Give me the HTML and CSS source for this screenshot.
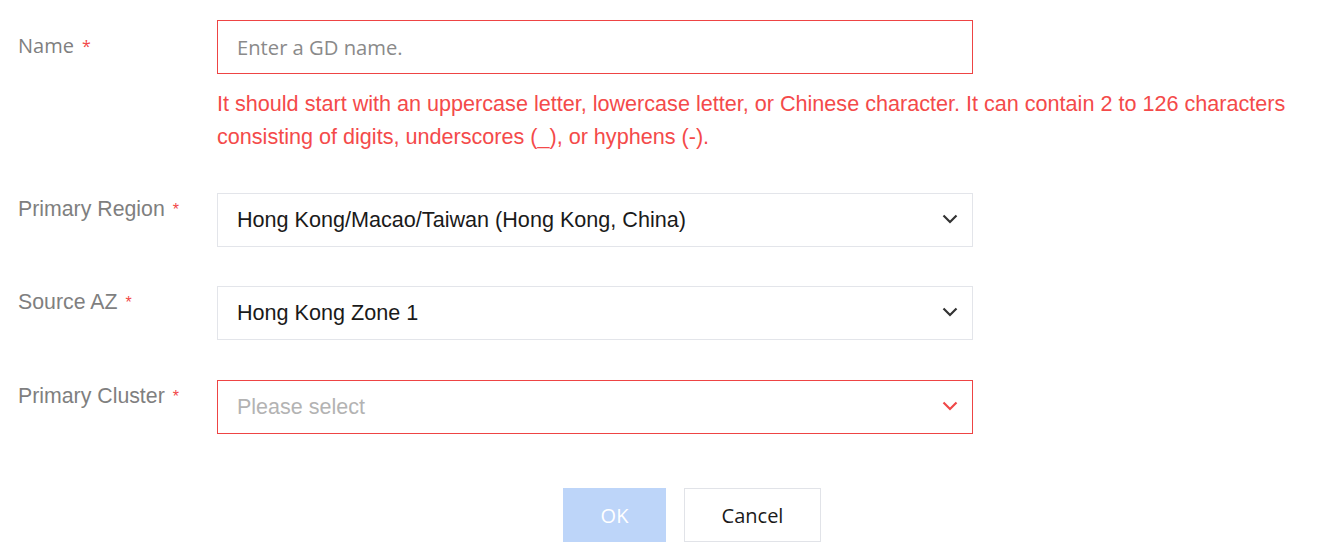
FILE: index.html
```html
<!DOCTYPE html>
<html>
<head>
<meta charset="utf-8">
<link rel="stylesheet" href="styles.css">
</head>
<body>
<form class="form">
  <div class="row row-name">
    <label class="label label-seg">Name<span class="req">*</span></label>
    <div class="control">
      <div class="input error"><span class="placeholder seg">Enter a GD name.</span></div>
      <div class="err-msg">It should start with an uppercase letter, lowercase letter, or Chinese character. It can contain 2 to 126 characters consisting of digits, underscores (_), or hyphens (-).</div>
    </div>
  </div>
  <div class="row row-region">
    <label class="label">Primary Region<span class="req">*</span></label>
    <div class="control">
      <div class="input select"><span class="value">Hong Kong/Macao/Taiwan (Hong Kong, China)</span>
        <svg class="chev" width="16" height="10" viewBox="0 0 16 10"><path d="M1.5 1.5 L8 8 L14.5 1.5" fill="none" stroke="#333" stroke-width="2.2"/></svg>
      </div>
    </div>
  </div>
  <div class="row row-az">
    <label class="label">Source AZ<span class="req">*</span></label>
    <div class="control">
      <div class="input select"><span class="value">Hong Kong Zone 1</span>
        <svg class="chev" width="16" height="10" viewBox="0 0 16 10"><path d="M1.5 1.5 L8 8 L14.5 1.5" fill="none" stroke="#333" stroke-width="2.2"/></svg>
      </div>
    </div>
  </div>
  <div class="row row-cluster">
    <label class="label">Primary Cluster<span class="req">*</span></label>
    <div class="control">
      <div class="input select error"><span class="placeholder">Please select</span>
        <svg class="chev" width="16" height="10" viewBox="0 0 16 10"><path d="M1.5 1.5 L8 8 L14.5 1.5" fill="none" stroke="#f04848" stroke-width="2.2"/></svg>
      </div>
    </div>
  </div>
  <div class="actions">
    <button type="button" class="btn btn-ok">OK</button>
    <button type="button" class="btn btn-cancel">Cancel</button>
  </div>
</form>
</body>
</html>
```
FILE: styles.css
```css
html, body {
  margin: 0;
  padding: 0;
  background: #ffffff;
}
body {
  font-family: "Liberation Sans", Arial, sans-serif;
  font-size: 21px;
  color: #191919;
}
.form {
  padding: 20px 0 0 18px;
  width: 1300px;
}
.row {
  display: flex;
  align-items: flex-start;
}
.row-name {
  margin-bottom: 40px;
}
.row-region {
  margin-bottom: 39px;
}
.row-az {
  margin-bottom: 40px;
}
.row-cluster {
  margin-bottom: 0;
}
.label {
  width: 199px;
  flex: none;
  color: #7f7f7f;
  font-size: 21.3px;
  line-height: 24px;
  padding-top: 4px;
}
.label-seg {
  font-family: "Open Sans", "Noto Sans", sans-serif;
  font-size: 20px;
  padding-top: 14px;
}
.req {
  color: #f24848;
  font-size: 16px;
  margin-left: 8px;
  position: relative;
  top: -1px;
}
.control {
  flex: none;
  width: 1090px;
}
.input {
  width: 756px;
  height: 54px;
  box-sizing: border-box;
  border: 1px solid #e3e5ea;
  display: flex;
  align-items: center;
  padding: 0 14px 0 19px;
}
.input.error {
  border-color: #ee4444;
}
.placeholder {
  color: #b3b3b3;
  font-size: 21.5px;
}
.seg {
  font-family: "Open Sans", "Noto Sans", sans-serif;
  font-size: 20.2px;
  color: #8a8a8a;
}
.value {
  color: #1a1a1a;
  font-size: 21.6px;
}
.chev {
  margin-left: auto;
  margin-top: -2px;
}
.err-msg {
  color: #f44a4a;
  font-size: 21.6px;
  line-height: 33px;
  padding-top: 13px;
  width: 1090px;
}
.actions {
  display: flex;
  gap: 18px;
  padding-left: 545px;
  margin-top: 54px;
}
.btn {
  height: 54px;
  box-sizing: border-box;
  font-family: "Open Sans", "Noto Sans", sans-serif;
  font-size: 20px;
  border: 1px solid #e1e3e8;
  background: #fff;
  color: #1a1a1a;
}
.btn-ok {
  width: 103px;
  background: #bdd5f9;
  border-color: #bdd5f9;
  color: #ffffff;
}
.btn-cancel {
  width: 137px;
}
```
